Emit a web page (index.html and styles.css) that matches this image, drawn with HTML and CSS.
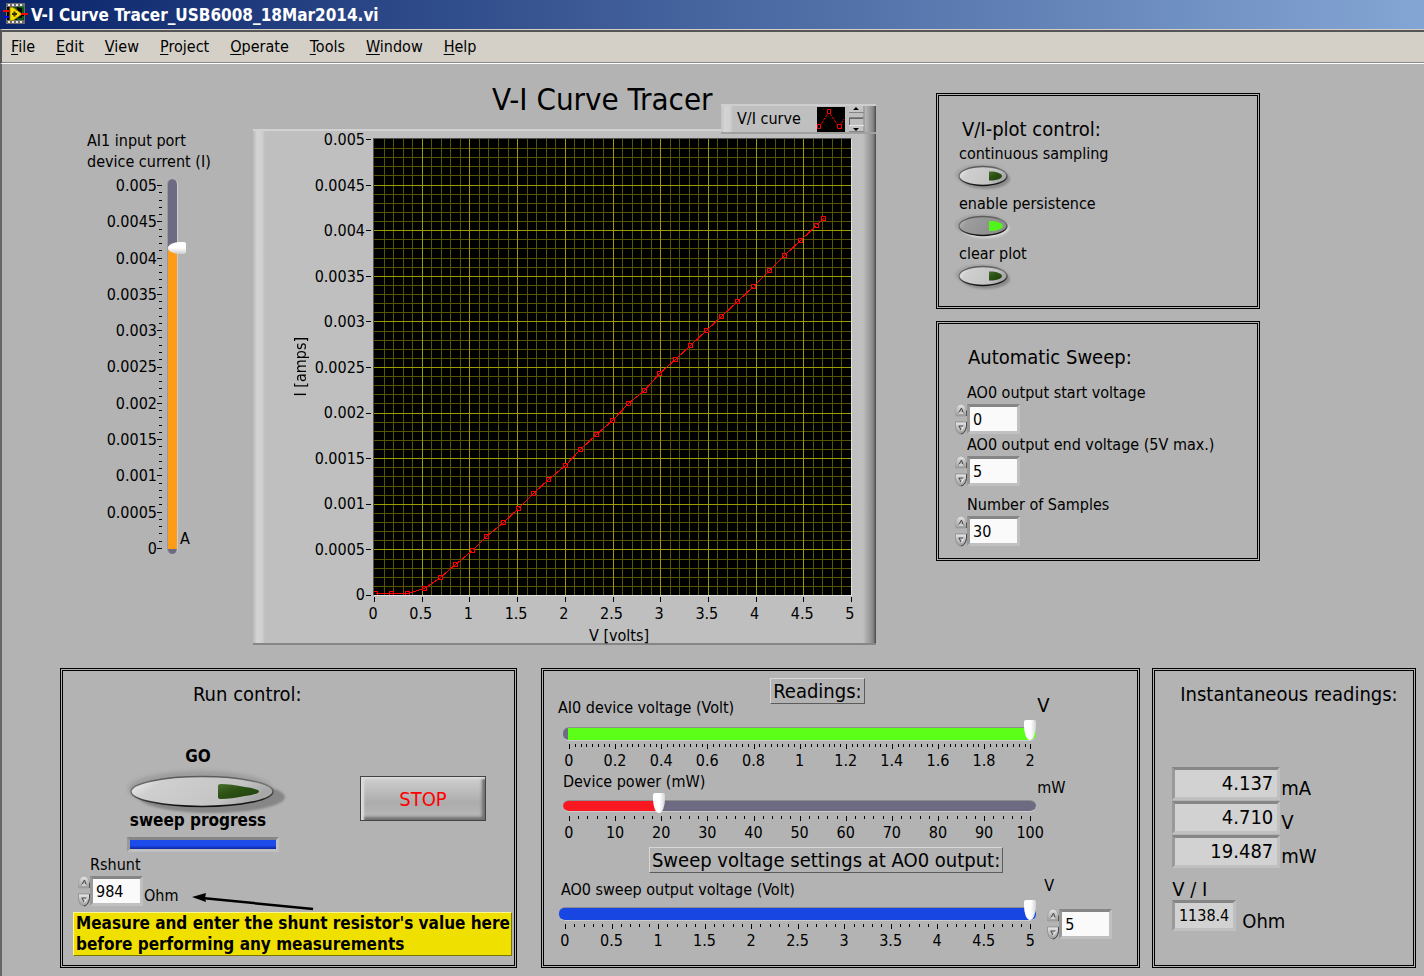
FILE: index.html
```html
<!DOCTYPE html>
<html lang="en">
<head>
<meta charset="utf-8">
<title>V-I Curve Tracer_USB6008_18Mar2014.vi</title>
<link rel="stylesheet" href="styles.css">
</head>
<body>
<svg class="defs" width="0" height="0" aria-hidden="true">
  <defs>
    <linearGradient id="face" x1="0" y1="0" x2="1" y2="0.3">
      <stop offset="0" stop-color="#f4f4f4"/><stop offset="0.25" stop-color="#cfcfcf"/><stop offset="0.8" stop-color="#c4c4c4"/><stop offset="1" stop-color="#a8a8a8"/>
    </linearGradient>
    <linearGradient id="facePressed" x1="0" y1="0" x2="1" y2="0.3">
      <stop offset="0" stop-color="#c4c4c4"/><stop offset="0.25" stop-color="#9c9c9c"/><stop offset="1" stop-color="#8c8c8c"/>
    </linearGradient>
    <linearGradient id="rim" x1="0" y1="0" x2="0.2" y2="1">
      <stop offset="0" stop-color="#555"/><stop offset="0.5" stop-color="#777"/><stop offset="1" stop-color="#111"/>
    </linearGradient>
    <linearGradient id="ledOff" x1="0" y1="0" x2="1" y2="1">
      <stop offset="0" stop-color="#4a7030"/><stop offset="0.4" stop-color="#2c5214"/><stop offset="1" stop-color="#1f3f0c"/>
    </linearGradient>
    <linearGradient id="knob" x1="0" y1="0" x2="0" y2="1">
      <stop offset="0" stop-color="#e8e8e8"/><stop offset="1" stop-color="#9a9a9a"/>
    </linearGradient>
    <filter id="soft" x="-20%" y="-40%" width="140%" height="180%"><feGaussianBlur stdDeviation="1"/></filter>
    <filter id="softer" x="-20%" y="-40%" width="140%" height="180%"><feGaussianBlur stdDeviation="2"/></filter>
    <symbol id="oval-off" viewBox="0 0 60 28">
      <ellipse cx="28" cy="11" rx="26" ry="11" fill="#a4a4a4" filter="url(#soft)"/>
      <ellipse cx="33" cy="15" rx="24" ry="10" fill="#8a8a8a" filter="url(#soft)"/>
      <ellipse cx="30" cy="12" rx="24" ry="9.500" fill="url(#face)" stroke="url(#rim)" stroke-width="1.400"/>
      <path d="M36 7.500h4q9 1.500 9 4.500t-9 4.500h-4z" fill="url(#ledOff)"/>
    </symbol>
    <symbol id="oval-on" viewBox="0 0 60 28">
      <ellipse cx="28" cy="11" rx="26" ry="11" fill="#a4a4a4" filter="url(#soft)"/>
      <ellipse cx="32" cy="14" rx="24" ry="10" fill="#dcdcdc" filter="url(#soft)"/>
      <ellipse cx="30" cy="12" rx="24" ry="9.500" fill="url(#facePressed)" stroke="url(#rim)" stroke-width="1.400"/>
      <path d="M36 7h5q9 2 9 5t-9 5h-5z" fill="#52f51a"/>
    </symbol>
    <symbol id="spin-up" viewBox="0 0 12 13">
      <path d="M0.500 12.500V9Q1 1 6 0.500Q11 1 11.500 9v3.500z" fill="url(#knob)" stroke="#9a9a9a" stroke-width="0.600"/>
      <path d="M11.500 7v5.500" stroke="#555"/>
      <path d="M4 9l2.500-4.500L8 9" fill="none" stroke="#444"/><path d="M4 9.500h4" stroke="#f4f4f4"/>
    </symbol>
    <symbol id="spin-down" viewBox="0 0 12 13">
      <path d="M0.500 0.500V4Q1 12 6 12.500Q11 12 11.500 4V0.500z" fill="url(#knob)" stroke="#777" stroke-width="0.600"/>
      <path d="M11.500 0.500V5Q10 12 6 12.500" fill="none" stroke="#444"/>
      <path d="M3.500 4.500h5M4 4.500l2 4" fill="none" stroke="#444"/><path d="M8.500 5l-2 4" stroke="#f4f4f4"/>
    </symbol>
  </defs>
</svg>

<header class="titlebar">
  <svg class="app-icon" width="25" height="23" viewBox="0 0 25 23" aria-hidden="true">
    <rect x="3" y="0" width="19" height="21" fill="#6c6c6c"/>
    <rect x="4" y="4" width="17" height="13" fill="#000"/>
    <path d="M5 2h16M5 19h16" stroke="#e8e8e8" stroke-width="2" stroke-dasharray="2 2"/>
    <path d="M11 5h2v3M16 4h4v6M14 16h6v-3" stroke="#0a7a1a" stroke-width="1.500" fill="none"/>
    <path d="M7 4.500h3L19 11L10 17.500H7z" fill="#f5e000" stroke="#a88c00"/>
    <path d="M9 11h5M11.500 8.500v5" stroke="#3a3000" stroke-width="2"/>
    <path d="M0 8h6M18 11h7" stroke="#f00" stroke-width="2"/>
    <path d="M1 14h5" stroke="#00f" stroke-width="2"/>
  </svg>
  <span>V-I Curve Tracer_USB6008_18Mar2014.vi</span>
</header>

<nav class="menubar" aria-label="Menu">
  <button type="button"><u>F</u>ile</button>
  <button type="button"><u>E</u>dit</button>
  <button type="button"><u>V</u>iew</button>
  <button type="button"><u>P</u>roject</button>
  <button type="button"><u>O</u>perate</button>
  <button type="button"><u>T</u>ools</button>
  <button type="button"><u>W</u>indow</button>
  <button type="button"><u>H</u>elp</button>
</nav>

<main class="panel-area">
  <div class="upper">
    <section class="current">
      <label for="ai1">AI1 input port<br>device current (I)</label>
      <div class="v-gauge">
        <ul class="v-labels">
          <li>0.005</li><li>0.0045</li><li>0.004</li><li>0.0035</li><li>0.003</li><li>0.0025</li><li>0.002</li><li>0.0015</li><li>0.001</li><li>0.0005</li><li>0</li>
        </ul>
        <svg class="v-ticks" data-axis="y" data-major="10" data-minor="5"></svg>
        <input id="ai1" class="v-slider" type="range" min="0" max="5" step="0.001" value="4.137">
        <span class="v-unit">A</span>
      </div>
    </section>

    <section class="chart">
      <h1>V-I Curve Tracer</h1>
      <div class="chart-frame">
        <div class="legend">
          <span>V/I curve</span>
          <svg width="28" height="25" viewBox="0 0 28 25" aria-hidden="true">
            <rect width="28" height="25" fill="#000"/>
            <path d="M2 20L12 5L22 20L27 12" fill="none" stroke="#f00" stroke-dasharray="3 1"/>
            <path d="M0.500 17.500h3v4h-3zM10.500 2.500h3v4h-3zM20.500 17.500h4v4h-4z" fill="#000" stroke="#f00"/>
          </svg>
          <svg width="17" height="26" viewBox="0 0 17 26" aria-hidden="true">
            <path d="M1 0h15v6H1zM1 20h15v6H1z" fill="#c4c4c4"/>
            <path d="M1 6.500h15M1 25.500h15M1 11.500h15M16 0v26" stroke="#858585"/>
            <path d="M1.500 19V13M1 12.500h14" stroke="#666"/>
            <path d="M1 19.500h15" stroke="#e6e6e6"/>
            <path d="M5 4h6L8 1zM5 22h6l-3 3z" fill="#000"/>
          </svg>
        </div>
        <div class="axis-y">
          <span class="y-title">I [amps]</span>
          <ul class="v-labels">
            <li>0.005</li><li>0.0045</li><li>0.004</li><li>0.0035</li><li>0.003</li><li>0.0025</li><li>0.002</li><li>0.0015</li><li>0.001</li><li>0.0005</li><li>0</li>
          </ul>
          <svg class="v-ticks" data-axis="y" data-major="10" data-minor="1"></svg>
        </div>
        <svg id="plot" class="plot" role="img" aria-label="V/I curve"></svg>
        <div class="axis-x">
          <svg class="h-ticks" data-axis="x" data-major="10" data-minor="1"></svg>
          <ul class="h-labels">
            <li>0</li><li>0.5</li><li>1</li><li>1.5</li><li>2</li><li>2.5</li><li>3</li><li>3.5</li><li>4</li><li>4.5</li><li>5</li>
          </ul>
          <span class="x-title">V [volts]</span>
        </div>
      </div>
    </section>

    <div class="side">
      <section class="panel plot-control">
        <h2>V/I-plot control:</h2>
        <div class="toggle">
          <label for="sampling">continuous sampling</label>
          <button id="sampling" type="button" aria-pressed="false"><svg width="60" height="28"><use href="#oval-off"/></svg></button>
        </div>
        <div class="toggle">
          <label for="persist">enable persistence</label>
          <button id="persist" type="button" aria-pressed="true"><svg width="60" height="28"><use href="#oval-on"/></svg></button>
        </div>
        <div class="toggle">
          <label for="clear">clear plot</label>
          <button id="clear" type="button"><svg width="60" height="28"><use href="#oval-off"/></svg></button>
        </div>
      </section>

      <section class="panel sweep">
        <h2>Automatic Sweep:</h2>
        <div class="field">
          <label for="start">AO0 output start voltage</label>
          <div class="numeric">
            <div class="spin"><button type="button" aria-label="Increase"><svg width="12" height="14"><use href="#spin-up"/></svg></button><button type="button" aria-label="Decrease"><svg width="12" height="14"><use href="#spin-down"/></svg></button></div>
            <input id="start" type="text" value="0">
          </div>
        </div>
        <div class="field">
          <label for="end">AO0 output end voltage (5V max.)</label>
          <div class="numeric">
            <div class="spin"><button type="button" aria-label="Increase"><svg width="12" height="14"><use href="#spin-up"/></svg></button><button type="button" aria-label="Decrease"><svg width="12" height="14"><use href="#spin-down"/></svg></button></div>
            <input id="end" type="text" value="5">
          </div>
        </div>
        <div class="field samples">
          <label for="samples">Number of Samples</label>
          <div class="numeric">
            <div class="spin"><button type="button" aria-label="Increase"><svg width="12" height="14"><use href="#spin-up"/></svg></button><button type="button" aria-label="Decrease"><svg width="12" height="14"><use href="#spin-down"/></svg></button></div>
            <input id="samples" type="text" value="30">
          </div>
        </div>
      </section>
    </div>
  </div>

  <div class="lower">
    <section class="panel run">
      <h2>Run control:</h2>
      <div class="run-row">
        <div class="run-go">
          <label class="strong" for="go">GO</label>
          <button id="go" class="go" type="button">
            <svg width="172" height="50" viewBox="0 0 172 50" aria-hidden="true">
              <ellipse cx="80" cy="23" rx="72" ry="18" fill="#9c9c9c" filter="url(#softer)"/>
              <ellipse cx="92" cy="31" rx="73" ry="16" fill="#868686" filter="url(#soft)"/>
              <ellipse cx="82" cy="25.500" rx="71" ry="15" fill="url(#face)" stroke="url(#rim)" stroke-width="1.500"/>
              <path d="M98 20q0-2 3-2q10 0 24 3q14 2 14 4.500t-14 4.500q-14 3-24 3q-3 0-3-2z" fill="url(#ledOff)"/>
            </svg>
          </button>
          <label class="strong" for="prog">sweep progress</label>
          <progress id="prog" max="100" value="100"></progress>
        </div>
        <button class="stop" type="button">STOP</button>
      </div>
      <div class="shunt">
        <label for="rshunt">Rshunt</label>
        <div class="shunt-row">
          <div class="numeric">
            <div class="spin"><button type="button" aria-label="Increase"><svg width="12" height="14"><use href="#spin-up"/></svg></button><button type="button" aria-label="Decrease"><svg width="12" height="14"><use href="#spin-down"/></svg></button></div>
            <input id="rshunt" type="text" value="984">
          </div>
          <span class="unit">Ohm</span>
          <svg class="arrow" width="123" height="18" viewBox="0 0 123 18" aria-hidden="true">
            <path d="M10 5L121 16" stroke="#000" stroke-width="2.500"/>
            <path d="M0 4L14 0L13 5L14 9z" fill="#000"/>
          </svg>
        </div>
      </div>
      <p class="note">Measure and enter the shunt resistor's value here<br>before performing any measurements</p>
    </section>

    <section class="panel readings">
      <div class="gauge">
        <div class="gauge-head">
          <label for="ai0">AI0 device voltage (Volt)</label>
          <h2 class="boxed">Readings:</h2>
        </div>
        <span class="gauge-unit large">V</span>
        <div class="gauge-body">
          <input id="ai0" class="h-slider green" type="range" min="0" max="2" step="0.1" value="2">
          <svg class="h-ticks" data-axis="x" data-major="10" data-minor="8"></svg>
          <ul class="h-labels"><li>0</li><li>0.2</li><li>0.4</li><li>0.6</li><li>0.8</li><li>1</li><li>1.2</li><li>1.4</li><li>1.6</li><li>1.8</li><li>2</li></ul>
        </div>
      </div>
      <div class="gauge power">
        <div class="gauge-head"><label for="pw">Device power (mW)</label></div>
        <span class="gauge-unit">mW</span>
        <div class="gauge-body">
          <input id="pw" class="h-slider red" type="range" min="0" max="100" step="0.1" value="19.5">
          <svg class="h-ticks" data-axis="x" data-major="10" data-minor="5"></svg>
          <ul class="h-labels"><li>0</li><li>10</li><li>20</li><li>30</li><li>40</li><li>50</li><li>60</li><li>70</li><li>80</li><li>90</li><li>100</li></ul>
        </div>
      </div>
      <h2 class="boxed settings">Sweep voltage settings at AO0 output:</h2>
      <div class="gauge output">
        <div class="gauge-head"><label for="ao0">AO0 sweep output voltage (Volt)</label></div>
        <label class="gauge-unit" for="ao0n">V</label>
        <div class="gauge-body">
          <input id="ao0" class="h-slider blue" type="range" min="0" max="5" step="0.1" value="5">
          <svg class="h-ticks" data-axis="x" data-major="10" data-minor="5"></svg>
          <ul class="h-labels"><li>0</li><li>0.5</li><li>1</li><li>1.5</li><li>2</li><li>2.5</li><li>3</li><li>3.5</li><li>4</li><li>4.5</li><li>5</li></ul>
        </div>
        <div class="numeric">
          <div class="spin"><button type="button" aria-label="Increase"><svg width="12" height="14"><use href="#spin-up"/></svg></button><button type="button" aria-label="Decrease"><svg width="12" height="14"><use href="#spin-down"/></svg></button></div>
          <input id="ao0n" type="text" value="5">
        </div>
      </div>
    </section>

    <section class="panel instant">
      <h2>Instantaneous readings:</h2>
      <div class="readouts">
        <div class="readout"><output>4.137</output><span>mA</span></div>
        <div class="readout"><output>4.710</output><span>V</span></div>
        <div class="readout"><output>19.487</output><span>mW</span></div>
      </div>
      <p class="ratio">V / I</p>
      <div class="readout small"><output>1138.4</output><span>Ohm</span></div>
    </section>
  </div>
</main>
<script src="app.js"></script>
</body>
</html>
```
FILE: styles.css
```css
* { box-sizing: border-box; }

body {
  margin: 0;
  min-height: 100vh;
  display: flex;
  flex-direction: column;
  background: #b3b3b3;
  color: #000;
  font: 16px/20px "DejaVu Sans Condensed", "DejaVu Sans", sans-serif;
}

.defs { position: absolute; }
button { padding: 0; border: 0; background: none; color: inherit; font: inherit; }
ul { margin: 0; padding: 0; list-style: none; }
svg { display: block; flex: none; }
h1, h2, p { margin: 0; font-weight: 400; }
h2 { font-size: 20px; line-height: 24px; white-space: nowrap; }
label { white-space: nowrap; }
.strong { font-size: 17px; font-weight: 700; }

/* Window chrome */
.titlebar {
  display: flex;
  align-items: center;
  gap: 3px;
  height: 29px;
  padding-left: 3px;
  background: linear-gradient(90deg, #0a246a, #84a6d4);
  color: #fff;
  font-size: 17px;
  font-weight: 700;
}
.menubar {
  display: flex;
  gap: 21px;
  height: 35px;
  padding: 2px 8px 2px 9px;
  border-top: 1px solid #d4d0c8;
  border-bottom: 1px solid #fff;
  border-left: 2px solid #555;
  background: #d4d0c8;
  box-shadow: inset 0 2px #555, inset 0 -1px #888;
}
.menubar u { text-underline-offset: 2px; }

.panel-area {
  flex: 1;
  display: flex;
  flex-direction: column;
  border-left: 2px solid #666;
}
.panel { border: 3px double #000; }

/* Upper row */
.upper {
  display: flex;
  padding: 20px 164px 0 85px;
}
.current { width: 166px; padding-top: 46px; line-height: 21px; }
.current label { display: block; }
.v-gauge {
  display: flex;
  height: 375px;
  margin-top: 7px;
}
.v-labels {
  display: flex;
  flex-direction: column;
  justify-content: space-between;
  text-align: right;
}
.v-labels li { height: 0; line-height: 0; }
.v-gauge .v-labels { width: 70px; padding: 7px 0 5px; }
.v-gauge .v-ticks { margin: 6px 4px 5px 0; height: 363px; }
.v-ticks { width: 6px; overflow: visible; }
.v-unit { align-self: flex-end; margin: 0 0 5px 2px; }

input[type="range"] { appearance: none; -webkit-appearance: none; display: block; margin: 0; background: none; }

.v-slider {
  writing-mode: vertical-lr;
  direction: rtl;
  width: 11px;
  height: 375px;
}
.v-slider::-webkit-slider-runnable-track {
  width: 11px;
  height: 100%;
  border-radius: 6px;
  border-left: 1px solid #999;
  border-right: 1px solid #ccc;
  background: linear-gradient(#6c6b82 18%, #ff9c17 18%, #ff9c17 calc(100% - 5px), #6c6b82 calc(100% - 5px));
}
.v-slider::-webkit-slider-thumb {
  -webkit-appearance: none;
  width: 18px;
  height: 12px;
  border-radius: 12px 2px 2px 12px / 6px 2px 2px 6px;
  background: linear-gradient(#fff 50%, #ccc);
}

/* Chart */
.chart { flex: 1; min-width: 0; }
h1 {
  padding-left: 239px;
  font-size: 31px;
  line-height: 30px;
  white-space: nowrap;
}
.chart-frame {
  position: relative;
  display: grid;
  grid-template-columns: 108px 1fr;
  margin-top: 15px;
  padding: 7px 24px 0 12px;
  border-top: 2px solid #d2d2d2;
  border-bottom: 2px solid #868686;
  background:
    linear-gradient(90deg, #b8b8b8, #d4d4d4 4px, #d0d0d0 9px, #bfbfbf) left / 12px 100% no-repeat,
    linear-gradient(90deg, #bfbfbf, #8e8e8e 9px, #787878 11px, #444) right / 13px 100% no-repeat,
    #bfbfbf;
}
.legend {
  position: absolute;
  top: -27px;
  right: 0;
  display: flex;
  align-items: center;
  width: 155px;
  height: 30px;
  padding-left: 16px;
  gap: 3px;
  border-top: 2px solid #cecece;
  border-bottom: 2px solid #a0a0a0;
  background:
    linear-gradient(90deg, #c4c4c4, #d4d4d4 4px, #d0d0d0 9px, #bfbfbf) left / 12px 100% no-repeat,
    linear-gradient(90deg, #bfbfbf, #8e8e8e 8px, #787878 10px, #444) right / 12px 100% no-repeat,
    #bfbfbf;
}
.legend span { flex: none; width: 77px; }
.axis-y {
  display: grid;
  grid-template-columns: 26px 1fr 7px;
  padding-left: 26px;
}
.y-title {
  align-self: center;
  writing-mode: vertical-rl;
  transform: rotate(180deg);
}
.axis-y .v-labels { padding: 2px 1px 1px 0; margin-left: -10px; }
.axis-y .v-ticks { margin-top: 1px; height: 456px; }
.plot {
  width: 100%;
  height: 458px;
  border: 1px solid;
  border-color: #555 #e0e0e0 #e0e0e0 #555;
  background: #000;
}
.axis-x {
  grid-column: 2;
  display: flex;
  flex-direction: column;
  padding-right: 2px;
}
.h-ticks { width: 100%; height: 6px; overflow: visible; }
.axis-x .h-ticks { margin: 1px 0 1px 1px; }
.h-labels { display: flex; justify-content: space-between; }
.h-labels li { display: flex; justify-content: center; width: 0; }
.x-title { margin: 2px 0 -3px 216px; }

/* Right column */
.side {
  flex: none;
  display: flex;
  flex-direction: column;
  gap: 12px;
  width: 324px;
  margin: 9px 0 0 60px;
}
.plot-control { padding: 21px 20px 12px; }
.plot-control h2 { padding-left: 3px; margin-bottom: 3px; }
.toggle { display: flex; flex-direction: column; align-items: flex-start; margin-bottom: 2px; }
.toggle button { margin-left: -6px; }
.sweep { padding: 21px 16px 11px; }
.sweep h2 { padding-left: 13px; margin-bottom: 14px; }
.field label { display: block; padding-left: 12px; }
.field.samples { margin-top: 8px; }

.numeric { display: flex; align-items: center; height: 32px; }
.spin { display: flex; flex-direction: column; justify-content: space-between; height: 32px; width: 12px; }
.numeric input {
  width: 53px;
  height: 30px;
  padding: 0 3px;
  border: 3px solid;
  border-color: #868686 #c0c0c0 #c0c0c0 #999;
  background: #fafafa;
  color: #000;
  font: inherit;
}

/* Lower row */
.lower {
  display: grid;
  grid-template-columns: 468fr 600fr 264fr;
  margin: 23px 8px 7px 58px;
  column-gap: 12px;
}
.run {
  display: flex;
  flex-direction: column;
  margin-right: 12px;
  padding: 11px 2px 9px 10px;
}
.run h2 { padding-left: 120px; }
.run-row { display: flex; align-items: flex-start; gap: 81px; padding: 40px 0 0 54px; }
.run-go { display: flex; flex-direction: column; width: 152px; }
.run-go label { padding-right: 10px; text-align: center; }
.go { height: 44px; margin-left: -7px; }
progress {
  appearance: none;
  -webkit-appearance: none;
  width: 152px;
  height: 15px;
  margin-top: 7px;
  border: 3px solid;
  border-color: #868686 #c0c0c0 #c0c0c0 #999;
}
progress::-webkit-progress-bar { background: #888; }
progress::-webkit-progress-value { background: linear-gradient(#1c4cec 60%, #0c24a0); }
.stop {
  width: 126px;
  height: 45px;
  margin-top: 30px;
  border: 1px solid #444;
  background: linear-gradient(#d0d0d0, #acacac 60%, #bababa);
  box-shadow: inset 3px 2px 2px #dcdcdc, inset -3px -3px 3px #707070;
  color: #f00;
  font-size: 20px;
}
.shunt { padding-top: 3px; }
.shunt > label { display: block; padding-left: 17px; }
.shunt-row { display: flex; padding-left: 5px; }
.shunt-row .unit { margin: 11px 14px 0 1px; }
.shunt-row .arrow { margin-top: 18px; }
.note {
  align-self: flex-start;
  margin-top: 1px;
  padding: 0 1px 0 2px;
  border: 1px solid;
  border-color: #fff890 #7a7400 #7a7400 #fff890;
  background: #f0e000;
  font-size: 17px;
  font-weight: 700;
  line-height: 21px;
  white-space: nowrap;
}

.readings { padding: 7px 5px 8px 14px; }
.gauge { display: grid; grid-template-columns: 1fr 96px; }
.gauge-head { display: flex; align-items: flex-end; }
.gauge-body { padding: 3px 0 0 5px; }
.gauge-body .h-ticks { margin: 3px 6px 1px; width: calc(100% - 12px); }
.gauge-body .h-labels { margin: 0 6px; }
.gauge-head .boxed { margin: 0 0 14px 36px; }
.boxed {
  padding: 0 2px;
  border: 1px solid;
  border-color: #d8d8d8 #5c5c5c #5c5c5c #d8d8d8;
}
.gauge-unit { padding-left: 1px; }
.gauge-unit.large { padding-top: 15px; font-size: 20px; line-height: 24px; }
.power { margin-top: 1px; }
.power .gauge-head { padding-left: 5px; }
.power .gauge-unit { margin: 6px 0 -6px; }
.power .gauge-body { padding-top: 1px; }
.settings { width: fit-content; margin: 4px 0 7px 91px; }
.output .gauge-head { padding-left: 3px; }
.output .gauge-unit { padding-left: 8px; margin-top: -4px; }
.output .gauge-body { padding: 1px 0 0 1px; }
.output .numeric { margin: 8px 0 0 11px; }

.h-slider { width: 100%; height: 20px; }
.h-slider::-webkit-slider-runnable-track {
  height: 14px;
  margin-top: 6px;
  border-radius: 6px;
  border-top: 1px solid #8e8e8e;
  border-bottom: 1px solid #ccc;
}
.h-slider::-webkit-slider-thumb {
  -webkit-appearance: none;
  width: 12px;
  height: 20px;
  margin-top: -8px;
  border-radius: 2px 2px 6px 6px / 2px 2px 14px 14px;
  background: linear-gradient(90deg, #fff 55%, #d4d4d4);
}
.green::-webkit-slider-runnable-track { background: linear-gradient(90deg, #6c6b82 5px, #5cff17 5px); }
.red::-webkit-slider-runnable-track { background: linear-gradient(90deg, #f91822 20%, #6c6b82 20%); height: 12px; }
.blue::-webkit-slider-runnable-track { background: #1746e2; }

.instant { padding: 11px 14px 10px 17px; }
.instant h2 { padding-left: 8px; margin-bottom: 61px; }
.readouts { display: flex; flex-direction: column; gap: 1px; }
.readout { display: flex; align-items: flex-start; font-size: 20px; }
.readout output {
  width: 108px;
  height: 33px;
  padding-right: 4px;
  border: 3px solid;
  border-color: #868686 #c0c0c0 #c0c0c0 #999;
  background: #d2d2d2;
  line-height: 27px;
  text-align: right;
}
.readout span { padding: 11px 0 0 1px; line-height: 20px; }
.ratio { margin: 11px 0 1px; font-size: 20px; }
.readout.small output { width: 64px; height: 31px; font-size: 16px; line-height: 25px; }
.readout.small span { padding-left: 6px; }
```
FILE: app.js
```js
const NS = 'http://www.w3.org/2000/svg';

function add(svg, name, attrs) {
  const node = document.createElementNS(NS, name);
  for (const key in attrs) node.setAttribute(key, attrs[key]);
  svg.appendChild(node);
}

// Scale ticks: majors are 5px long, minors 3px.
document.querySelectorAll('svg[data-axis]').forEach((svg) => {
  const major = Number(svg.dataset.major);
  const minor = Number(svg.dataset.minor);
  const count = major * minor;
  for (let i = 0; i <= count; i++) {
    const isMajor = i % minor === 0;
    const at = (i / count) * 100 + '%';
    const len = isMajor ? 5 : 3;
    if (svg.dataset.axis === 'x') {
      add(svg, 'rect', { x: at, y: 0, width: 1, height: len, 'shape-rendering': 'crispEdges' });
    } else {
      add(svg, 'rect', { x: 5 - len, y: at, width: len, height: 1, 'shape-rendering': 'crispEdges' });
    }
  }
});

// Plot grid: ten major divisions with five minor steps each.
const plot = document.getElementById('plot');
for (const isMajor of [false, true]) {
  for (let i = 1; i < 50; i++) {
    if ((i % 5 === 0) !== isMajor) continue;
    const fill = isMajor ? '#9c9c00' : '#565600';
    const at = i * 2 + '%';
    add(plot, 'rect', { x: at, y: 0, width: 1, height: '100%', fill, 'shape-rendering': 'crispEdges' });
    add(plot, 'rect', { x: 0, y: at, width: '100%', height: 1, fill, 'shape-rendering': 'crispEdges' });
  }
}

// Samples: volts, milliamps.
const samples = [
  [0.014, 0.02], [0.18, 0.02], [0.35, 0.02], [0.527, 0.08], [0.695, 0.2], [0.852, 0.34],
  [1.03, 0.495], [1.177, 0.65], [1.355, 0.8], [1.513, 0.955], [1.67, 1.12], [1.827, 1.27],
  [2.005, 1.43], [2.163, 1.6], [2.33, 1.76], [2.498, 1.92], [2.666, 2.1], [2.833, 2.25],
  [2.99, 2.43], [3.158, 2.59], [3.316, 2.74], [3.483, 2.905], [3.64, 3.06], [3.808, 3.22],
  [3.976, 3.385], [4.144, 3.56], [4.3, 3.725], [4.469, 3.89], [4.636, 4.055], [4.71, 4.13]
];

// Snaps every marker and line end to a whole pixel, and redraws when the plot is resized.
const trace = document.createElementNS(NS, 'g');
plot.appendChild(trace);
function drawTrace() {
  trace.replaceChildren();
  const w = plot.clientWidth;
  const h = plot.clientHeight;
  const points = samples.map(([v, i]) => [Math.round(v / 5 * w), Math.round(h - i / 5 * h)]);
  for (const [x, y] of points) {
    add(trace, 'rect', { x: x - 2, y: y - 2, width: 5, height: 5, fill: '#f00' });
    add(trace, 'rect', { x: x - 1, y: y - 1, width: 3, height: 3, fill: '#000' });
  }
  add(trace, 'polyline', {
    points: points.map(([x, y]) => `${x + 0.5},${y + 0.5}`).join(' '),
    fill: 'none', stroke: '#f00', 'shape-rendering': 'crispEdges'
  });
}
drawTrace();
new ResizeObserver(drawTrace).observe(plot);
```
